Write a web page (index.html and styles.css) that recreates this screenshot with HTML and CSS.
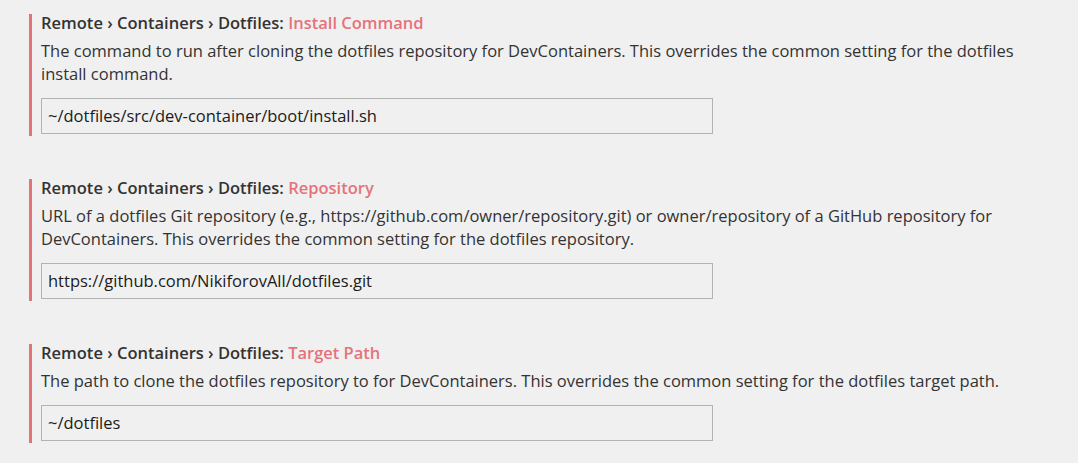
FILE: index.html
```html
<!DOCTYPE html>
<html>
<head>
<meta charset="utf-8">
<link rel="stylesheet" href="styles.css">
</head>
<body>
<div class="settings">
  <div class="setting">
    <div class="title">Remote › Containers › Dotfiles: <span class="key">Install Command</span></div>
    <div class="desc">The command to run after cloning the dotfiles repository for DevContainers. This overrides the common setting for the dotfiles<br>install command.</div>
    <div class="input">~/dotfiles/src/dev-container/boot/install.sh</div>
  </div>
  <div class="setting">
    <div class="title">Remote › Containers › Dotfiles: <span class="key">Repository</span></div>
    <div class="desc">URL of a dotfiles Git repository (e.g., https://github.com/owner/repository.git) or owner/repository of a GitHub repository for<br>DevContainers. This overrides the common setting for the dotfiles repository.</div>
    <div class="input">https://github.com/NikiforovAll/dotfiles.git</div>
  </div>
  <div class="setting">
    <div class="title">Remote › Containers › Dotfiles: <span class="key">Target Path</span></div>
    <div class="desc">The path to clone the dotfiles repository to for DevContainers. This overrides the common setting for the dotfiles target path.</div>
    <div class="input">~/dotfiles</div>
  </div>
</div>
</body>
</html>
```

FILE: styles.css
```css
html, body {
  margin: 0;
  padding: 0;
  background: #f0f0f0;
}
body {
  font-family: "Open Sans", "Noto Sans", sans-serif;
  font-size: 16.5px;
  color: #333333;
}
.settings {
  display: flex;
  flex-direction: column;
  gap: 43px;
  padding: 14px 0 0 29px;
}
.setting {
  border-left: 3px solid #e57373;
  padding: 0 0 2px 9px;
}
.title {
  font-weight: 600;
  line-height: 18px;
  color: #333333;
}
.key {
  color: #e5737a;
}
.desc {
  margin-top: 7px;
  line-height: 23px;
  white-space: nowrap;
  color: #333333;
}
.input {
  margin-top: 13px;
  width: 664px;
  height: 34px;
  border: 1px solid #b3b3b3;
  padding: 0 0 0 6px;
  line-height: 34px;
  color: #1b1b1b;
  box-sizing: content-box;
}
```
